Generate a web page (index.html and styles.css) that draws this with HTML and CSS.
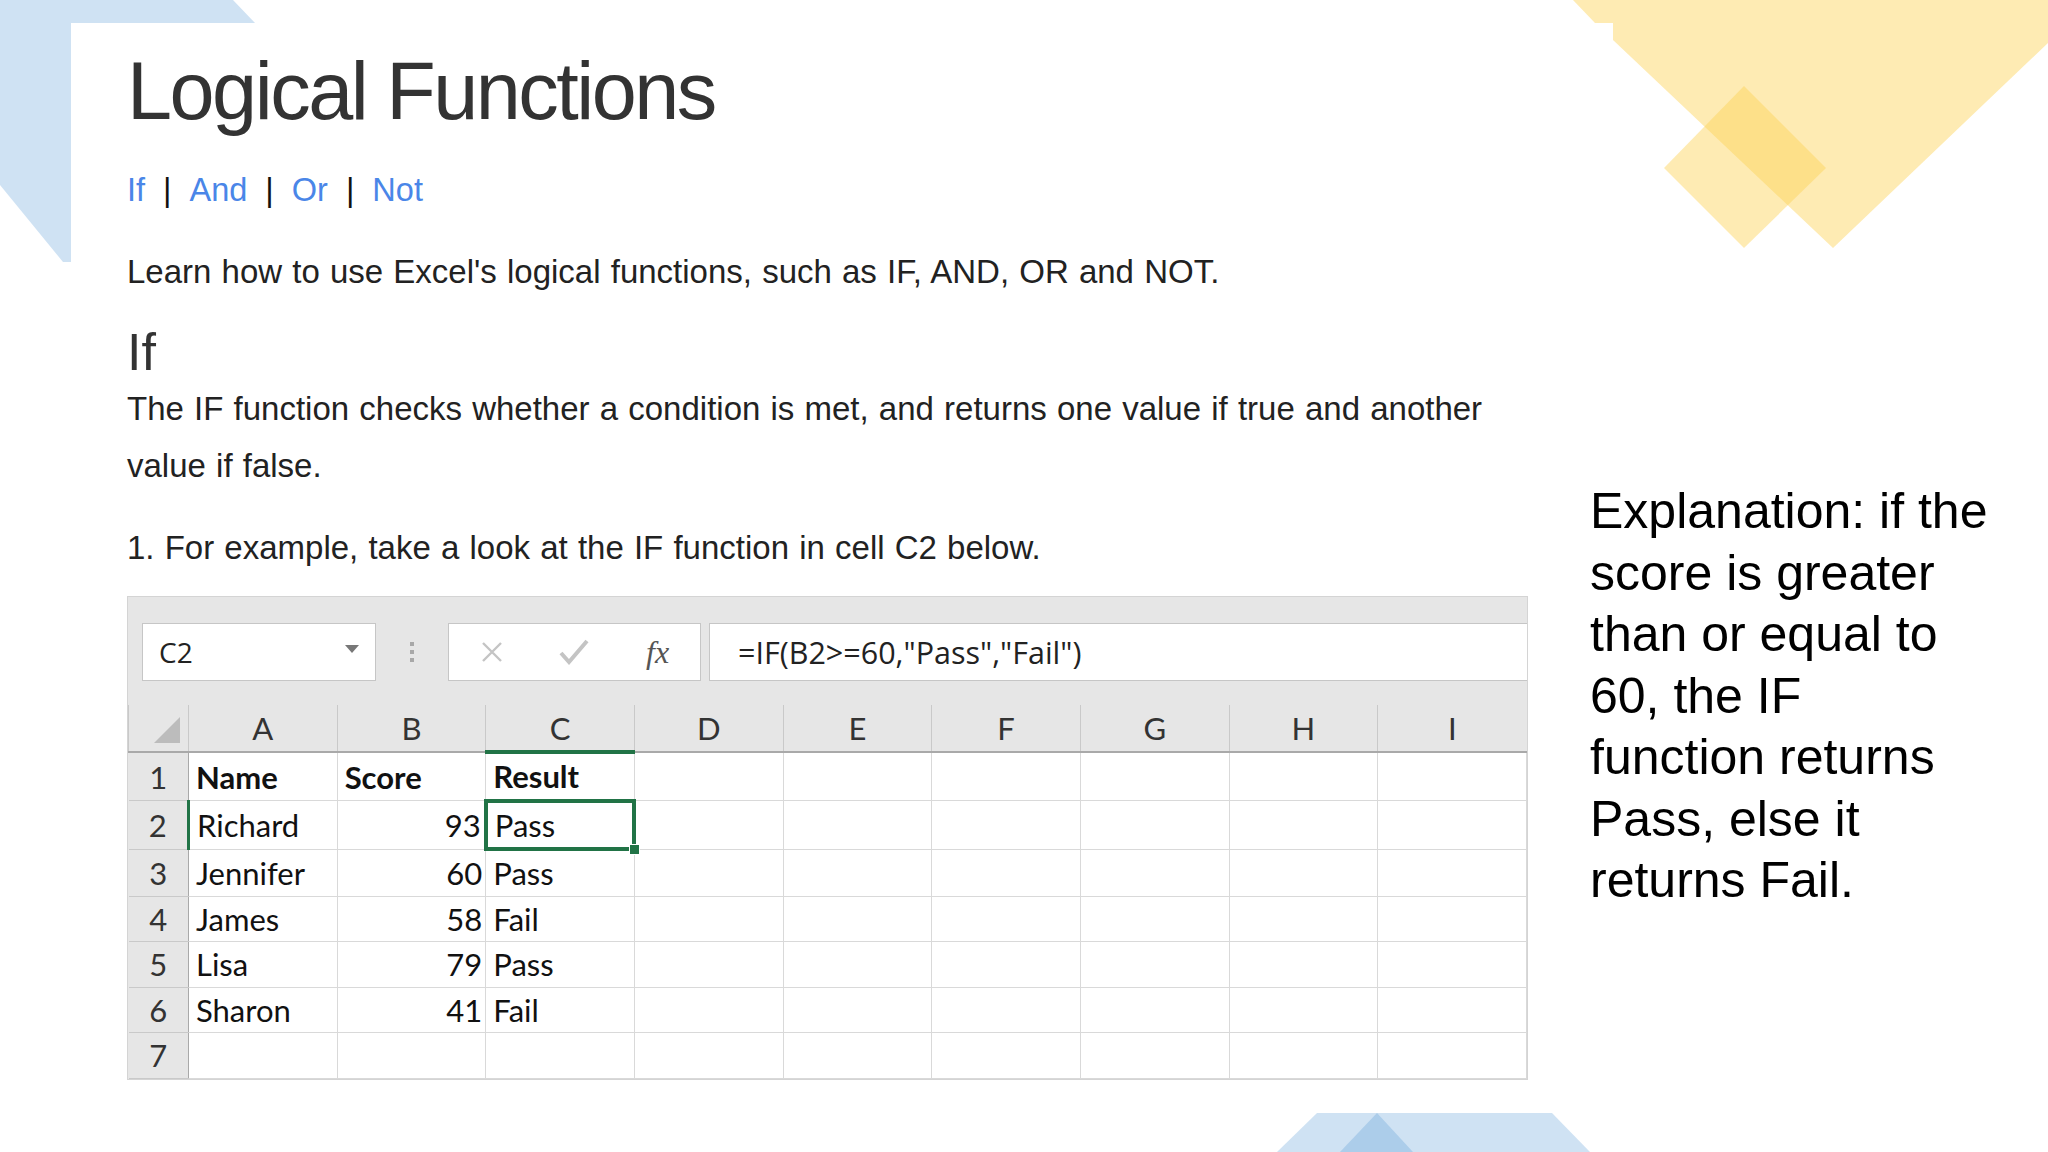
FILE: index.html
```html
<!DOCTYPE html>
<html lang="en">
<head>
    <meta charset="UTF-8">
    <meta name="viewport" content="width=device-width, initial-scale=1.0">
    <title>Logical Functions</title>
    <link rel="stylesheet" href="styles.css">
</head>
<body>

    <!-- decorative shapes behind the slide -->
    <svg class="backdrop" width="2048" height="1152" viewBox="0 0 2048 1152">
        <polygon class="blue" points="0,0 233,0 255,23 71,23 71,262 63,262 0,185"/>
        <polygon class="yellow" points="1573,0 1595,23 1613,23 1613,40 1833,248 2048,43 2048,0"/>
        <polygon class="yellow" points="1744,86 1826,168 1744,248 1664,168"/>
        <polygon class="blue" points="1317,1113 1377,1113 1413,1152 1277,1152"/>
        <polygon class="blue" points="1377,1113 1552,1113 1590,1152 1340,1152"/>
    </svg>

    <div class="page">
        <main class="lesson">
            <h1>Logical Functions</h1>

            <nav class="topics">
                <a href="#if">If</a><span class="sep">|</span><a href="#and">And</a><span class="sep">|</span><a href="#or">Or</a><span class="sep">|</span><a href="#not">Not</a>
            </nav>

            <p class="intro">Learn how to use Excel's logical functions, such as IF, AND, OR and NOT.</p>

            <h2 id="if">If</h2>
            <p class="body">The IF function checks whether a condition is met, and returns one value if true and another value if false.</p>
            <p class="step">1. For example, take a look at the IF function in cell C2 below.</p>

            <!-- Excel screenshot -->
            <div class="excel">
                <div class="formula-bar">
                    <div class="name-box">
                        <span>C2</span>
                        <span class="caret"></span>
                    </div>
                    <div class="grip"><i></i><i></i><i></i></div>
                    <div class="fx-box">
                        <svg class="cancel" width="24" height="24" viewBox="0 0 24 24"><path d="M3 3 L21 21 M21 3 L3 21"/></svg>
                        <svg class="enter" width="30" height="26" viewBox="0 0 30 26"><path d="M2 14 L10 23 L28 2"/></svg>
                        <span class="fx">fx</span>
                    </div>
                    <div class="formula">=IF(B2&gt;=60,"Pass","Fail")</div>
                </div>

                <table class="sheet">
                    <colgroup>
                        <col class="num-col">
                        <col span="9">
                    </colgroup>
                    <thead>
                        <tr>
                            <th class="corner"><span></span></th>
                            <th>A</th><th>B</th><th class="active">C</th><th>D</th><th>E</th><th>F</th><th>G</th><th>H</th><th>I</th>
                        </tr>
                    </thead>
                    <tbody>
                        <tr>
                            <th>1</th>
                            <td class="bold">Name</td><td class="bold">Score</td><td class="bold">Result</td>
                            <td></td><td></td><td></td><td></td><td></td><td></td>
                        </tr>
                        <tr>
                            <th class="active">2</th>
                            <td>Richard</td><td class="num">93</td><td class="selected">Pass</td>
                            <td></td><td></td><td></td><td></td><td></td><td></td>
                        </tr>
                        <tr>
                            <th>3</th>
                            <td>Jennifer</td><td class="num">60</td><td>Pass</td>
                            <td></td><td></td><td></td><td></td><td></td><td></td>
                        </tr>
                        <tr>
                            <th>4</th>
                            <td>James</td><td class="num">58</td><td>Fail</td>
                            <td></td><td></td><td></td><td></td><td></td><td></td>
                        </tr>
                        <tr>
                            <th>5</th>
                            <td>Lisa</td><td class="num">79</td><td>Pass</td>
                            <td></td><td></td><td></td><td></td><td></td><td></td>
                        </tr>
                        <tr>
                            <th>6</th>
                            <td>Sharon</td><td class="num">41</td><td>Fail</td>
                            <td></td><td></td><td></td><td></td><td></td><td></td>
                        </tr>
                        <tr>
                            <th>7</th>
                            <td></td><td></td><td></td><td></td><td></td><td></td><td></td><td></td><td></td>
                        </tr>
                    </tbody>
                </table>
            </div>
        </main>

        <aside class="explanation">
            Explanation: if the<br>
            score is greater<br>
            than or equal to<br>
            60, the IF<br>
            function returns<br>
            Pass, else it<br>
            returns Fail.
        </aside>
    </div>

</body>
</html>
```

FILE: styles.css
```css
/* Page */
body {
    margin: 0;
    width: 2048px;
    height: 1152px;
    overflow: hidden;
    position: relative;
    background: #ffffff;
    font-family: "Liberation Sans", Arial, sans-serif;
    color: #222;
}

/* Background shapes */
.backdrop {
    position: absolute;
    left: 0;
    top: 0;
    z-index: 0;
}
.backdrop .blue {
    fill: #4d94d3;
    fill-opacity: 0.27;
}
.backdrop .yellow {
    fill: #fdd356;
    fill-opacity: 0.45;
}

.page {
    position: relative;
    z-index: 1;
    display: flex;
    align-items: flex-start;
    padding-left: 127px;
}

/* Left column */
.lesson {
    width: 1401px;
}

h1 {
    margin: 51px 0 0;
    font-size: 81px;
    line-height: 81px;
    font-weight: normal;
    letter-spacing: -2.5px;
    color: #333;
}

.topics {
    margin-top: 42px;
    font-size: 32.5px;
    line-height: 32px;
}
.topics a {
    color: #4a86e8;
    text-decoration: none;
}
.topics .sep {
    margin: 0 18px;
    color: #111;
}

p {
    margin: 0;
    max-width: 1385px;
    font-size: 33px;
    line-height: 57px;
    word-spacing: 1px;
}
.intro {
    margin-top: 37px;
}

h2 {
    margin: 26px 0 0;
    font-size: 52px;
    line-height: 52px;
    font-weight: normal;
    color: #333;
}
.body {
    margin-top: 2px;
}
.step {
    margin-top: 25px;
}

/* Excel screenshot */
.excel {
    margin-top: 20px;
    width: 1401px;
    background: #e6e6e6;
    border: 1px solid #d4d4d4;
    box-sizing: border-box;
    font-family: "Open Sans", sans-serif;
}

.formula-bar {
    display: flex;
    align-items: center;
    height: 108px;
    padding: 2px 0 0 14px;
    box-sizing: border-box;
}

.name-box,
.fx-box,
.formula {
    height: 58px;
    background: #fff;
    border: 1px solid #c6c6c6;
    box-sizing: border-box;
    display: flex;
    align-items: center;
}

.name-box {
    width: 234px;
    padding: 0 16px;
    justify-content: space-between;
    font-size: 28px;
    color: #222;
}
.caret {
    width: 0;
    height: 0;
    border-left: 7px solid transparent;
    border-right: 7px solid transparent;
    border-top: 8px solid #777;
    margin-top: -6px;
}

.grip {
    width: 72px;
    display: flex;
    flex-direction: column;
    align-items: center;
    gap: 4px;
}
.grip i {
    width: 4px;
    height: 4px;
    background: #a8a8a8;
}

.fx-box {
    width: 253px;
    padding-left: 31px;
}
.fx-box svg {
    fill: none;
    stroke-width: 2.4;
}
.cancel {
    stroke: #c4c4c4;
}
.enter {
    margin-left: 55px;
    stroke: #c4c4c4;
    stroke-width: 4 !important;
}
.fx {
    margin-left: 57px;
    font-family: "Liberation Serif", serif;
    font-style: italic;
    font-size: 32px;
    color: #555;
}

.formula {
    flex: 1;
    margin-left: 8px;
    padding-left: 28px;
    font-size: 30.5px;
    color: #222;
    border-right: none;
}

/* Grid */
.sheet {
    width: 100%;
    border-collapse: collapse;
    table-layout: fixed;
    font-family: Lato, sans-serif;
    font-size: 31px;
    color: #111;
}
.num-col {
    width: 60px;
}

.sheet thead th {
    height: 45px;
    padding: 0;
    font-weight: normal;
    color: #333;
    background: #e6e6e6;
    border-left: 1px solid #c9c9c9;
    border-bottom: 2px solid #a9a9a9;
}
.sheet thead th.active {
    border-bottom: 4px solid #217346;
}
.corner {
    position: relative;
}
.corner span {
    position: absolute;
    right: 8px;
    bottom: 8px;
    width: 0;
    height: 0;
    border-left: 26px solid transparent;
    border-bottom: 26px solid #bcbcbc;
}

.sheet tbody th {
    height: 44.5px;
    padding: 0;
    font-weight: normal;
    color: #333;
    background: #e6e6e6;
    border-bottom: 1px solid #c9c9c9;
    border-right: 1px solid #a9a9a9;
}
.sheet tbody th.active {
    border-right: 3px solid #217346;
}

.sheet td {
    height: 44.5px;
    padding: 0 7px;
    background: #fff;
    border: 1px solid #d9d9d9;
    white-space: nowrap;
    overflow: hidden;
}
.sheet td.bold {
    font-weight: bold;
}
.sheet td.num {
    text-align: right;
    padding-right: 3px;
}
.sheet td.selected {
    position: relative;
    overflow: visible;
    border: 4px solid #217346;
}
.sheet td.selected::after {
    content: "";
    position: absolute;
    right: -8px;
    bottom: -8px;
    width: 9px;
    height: 9px;
    background: #217346;
    border: 1px solid #fff;
}

/* Right column */
.explanation {
    margin: 481px 0 0 62px;
    font-size: 50px;
    line-height: 61.5px;
    color: #000;
    white-space: nowrap;
}
```
